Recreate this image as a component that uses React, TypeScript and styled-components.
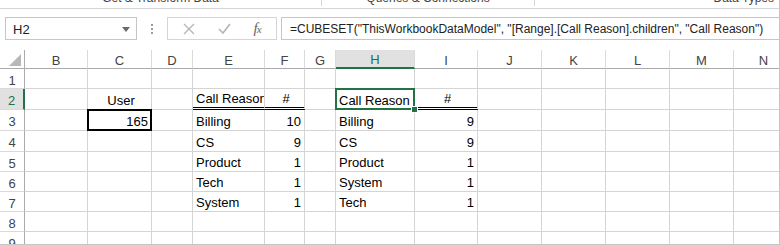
import React from 'react';
import styled, { createGlobalStyle, css } from 'styled-components';

const GlobalStyle = createGlobalStyle`
  html, body {
    margin: 0;
    padding: 0;
    background: #fff;
  }
  body {
    font-family: "Liberation Sans", Arial, sans-serif;
  }
`;

const GREEN = '#217346';

const Window = styled.div`
  width: 780px;
  height: 245px;
  box-sizing: border-box;
  overflow: hidden;
  display: flex;
  flex-direction: column;
  border-right: 1px solid #c6c6c6;
  border-bottom: 1px solid #c6c6c6;
  background: #fff;
`;

const RibbonStrip = styled.div`
  height: 8px;
  flex: none;
  display: flex;
  overflow: hidden;
  border-bottom: 1px solid #d5d5d5;
  background: #fff;
`;

const RibbonGroup = styled.div<{ $w: number; $align?: string }>`
  width: ${(p) => p.$w}px;
  flex: none;
  height: 6px;
  display: flex;
  justify-content: ${(p) => p.$align || 'center'};
  padding-right: ${(p) => (p.$align ? '6px' : '0')};
  box-sizing: border-box;
  border-right: 1px solid #d5d5d5;
  overflow: visible;

  &:last-child {
    border-right: none;
  }
`;

const RibbonLabel = styled.span`
  font-size: 12px;
  line-height: 12px;
  color: #444;
  margin-top: -8px;
  white-space: nowrap;
`;

const FormulaBand = styled.div`
  height: 41px;
  flex: none;
  display: flex;
  align-items: flex-start;
  padding: 8px 0 0 5px;
  box-sizing: border-box;
  background: #fff;
`;

const NameBox = styled.div`
  width: 132px;
  height: 23px;
  flex: none;
  box-sizing: border-box;
  border: 1px solid #c6c6c6;
  background: #fff;
  display: flex;
  align-items: center;
  justify-content: space-between;
  padding: 1px 6px 0 7px;
  font-size: 13px;
  color: #222;
`;

const Grip = styled.div`
  width: 30px;
  height: 23px;
  flex: none;
  display: flex;
  flex-direction: column;
  align-items: center;
  justify-content: center;
  gap: 2px;

  span {
    width: 2px;
    height: 2px;
    background: #9a9a9a;
  }
`;

const FxBox = styled.div`
  width: 110px;
  height: 23px;
  flex: none;
  box-sizing: border-box;
  border: 1px solid #d5d5d5;
  background: #fff;
  display: flex;
  align-items: center;
  justify-content: space-around;
  padding: 0 4px;
`;

const FxLabel = styled.span`
  font-family: "Liberation Serif", "Times New Roman", serif;
  font-style: italic;
  font-size: 15px;
  color: #666;
  letter-spacing: -1px;

  small {
    font-size: 11px;
  }
`;

const FormulaInput = styled.div`
  margin-left: 4px;
  flex: 1;
  height: 23px;
  box-sizing: border-box;
  border: 1px solid #c6c6c6;
  border-right: none;
  background: #fff;
  display: flex;
  align-items: center;
  padding: 1px 0 0 8px;
  font-size: 12px;
  color: #222;
  white-space: nowrap;
  overflow: hidden;
`;

const Sheet = styled.div<{ $cols: string; $rows: string }>`
  display: grid;
  grid-template-columns: ${(p) => p.$cols};
  grid-template-rows: ${(p) => p.$rows};
  font-size: 13px;
`;

const ColHeader = styled.div<{ $active?: boolean }>`
  box-sizing: border-box;
  display: flex;
  align-items: center;
  justify-content: center;
  padding-top: 2px;
  color: #444;
  background: #fff;
  border-right: 1px solid #dadada;
  border-bottom: 1px solid #ababab;
  ${(p) =>
    p.$active &&
    css`
      background: #e1e1e1;
      color: ${GREEN};
      border-bottom: 2px solid ${GREEN};
    `}
`;

const Corner = styled.div`
  box-sizing: border-box;
  border-right: 1px solid #ababab;
  border-bottom: 1px solid #ababab;
  display: flex;
  align-items: flex-end;
  justify-content: flex-end;
  padding: 0 3px 2px 0;
`;

const RowHeader = styled.div<{ $active?: boolean }>`
  box-sizing: border-box;
  display: flex;
  align-items: center;
  justify-content: center;
  padding-top: 3px;
  color: #444;
  background: #fff;
  border-right: 1px solid #ababab;
  border-bottom: 1px solid #dadada;
  ${(p) =>
    p.$active &&
    css`
      background: #e1e1e1;
      color: ${GREEN};
      border-right: 2px solid ${GREEN};
    `}
`;

type Frame = 'select' | 'thick';

const Cell = styled.div<{ $align?: string; $double?: boolean; $frame?: Frame }>`
  box-sizing: border-box;
  position: relative;
  display: flex;
  align-items: flex-end;
  justify-content: ${(p) =>
    p.$align === 'right' ? 'flex-end' : p.$align === 'center' ? 'center' : 'flex-start'};
  padding: 0 ${(p) => (p.$align === 'right' ? '3px' : '0')} 0 3px;
  line-height: 16px;
  color: #000;
  white-space: nowrap;
  overflow: ${(p) => (p.$frame ? 'visible' : 'hidden')};
  border-right: 1px solid #d4d4d4;
  border-bottom: ${(p) => (p.$double ? '3px double #000' : '1px solid #d4d4d4')};
  ${(p) =>
    p.$frame &&
    css`
      z-index: 2;
      &::after {
        content: '';
        position: absolute;
        top: -1px;
        left: -1px;
        right: -1px;
        bottom: -1px;
        border: 2px solid ${p.$frame === 'select' ? GREEN : '#000'};
        pointer-events: none;
      }
    `}
`;

const CellText = styled.span`
  overflow: hidden;
`;

const FillHandle = styled.span`
  position: absolute;
  right: -4px;
  bottom: -4px;
  width: 5px;
  height: 5px;
  background: ${GREEN};
  border: 1px solid #fff;
  z-index: 3;
`;

const columns = ['B', 'C', 'D', 'E', 'F', 'G', 'H', 'I', 'J', 'K', 'L', 'M', 'N'];
const widths = [25, 63, 64, 41, 72, 40, 31, 79, 63, 64, 64, 64, 64, 60];
const heights = [19, 20, 21, 21, 21, 20, 20, 20, 20, 20];

type CellDef = { v: string; align?: string; double?: boolean; frame?: Frame };

const data: Record<string, CellDef> = {
  C2: { v: 'User', align: 'center' },
  C3: { v: '165', align: 'right', frame: 'thick' },
  E2: { v: 'Call Reason', double: true },
  F2: { v: '#', align: 'center', double: true },
  H2: { v: 'Call Reason', frame: 'select' },
  I2: { v: '#', align: 'center', double: true },
};

const left = [
  ['Billing', '10'],
  ['CS', '9'],
  ['Product', '1'],
  ['Tech', '1'],
  ['System', '1'],
];
const right = [
  ['Billing', '9'],
  ['CS', '9'],
  ['Product', '1'],
  ['System', '1'],
  ['Tech', '1'],
];
left.forEach(([name, n], i) => {
  data[`E${i + 3}`] = { v: name };
  data[`F${i + 3}`] = { v: n, align: 'right' };
});
right.forEach(([name, n], i) => {
  data[`H${i + 3}`] = { v: name };
  data[`I${i + 3}`] = { v: n, align: 'right' };
});

const XIcon = () => (
  <svg width="12" height="12" viewBox="0 0 12 12">
    <path d="M1 1 L11 11 M11 1 L1 11" stroke="#b4b4b4" strokeWidth="1.3" fill="none" />
  </svg>
);

const CheckIcon = () => (
  <svg width="13" height="11" viewBox="0 0 13 11">
    <path d="M1 6 L5 10 L12 1" stroke="#b4b4b4" strokeWidth="1.6" fill="none" />
  </svg>
);

const DropArrow = () => (
  <svg width="8" height="5" viewBox="0 0 8 5">
    <path d="M0 0 H8 L4 5 Z" fill="#6a6a6a" />
  </svg>
);

const CornerTriangle = () => (
  <svg width="12" height="12" viewBox="0 0 12 12">
    <path d="M12 0 V12 H0 Z" fill="#b8b8b8" />
  </svg>
);

const App: React.FC = () => {
  return (
    <>
      <GlobalStyle />
      <Window>
        <RibbonStrip>
          <RibbonGroup $w={322}>
            <RibbonLabel>Get &amp; Transform Data</RibbonLabel>
          </RibbonGroup>
          <RibbonGroup $w={213}>
            <RibbonLabel>Queries &amp; Connections</RibbonLabel>
          </RibbonGroup>
          <RibbonGroup $w={245} $align="flex-end">
            <RibbonLabel>Data Types</RibbonLabel>
          </RibbonGroup>
        </RibbonStrip>

        <FormulaBand>
          <NameBox>
            <span>H2</span>
            <DropArrow />
          </NameBox>
          <Grip>
            <span />
            <span />
            <span />
          </Grip>
          <FxBox>
            <XIcon />
            <CheckIcon />
            <FxLabel>
              f<small>x</small>
            </FxLabel>
          </FxBox>
          <FormulaInput>
            =CUBESET("ThisWorkbookDataModel", "[Range].[Call Reason].children", "Call Reason")
          </FormulaInput>
        </FormulaBand>

        <Sheet
          $cols={widths.map((w) => `${w}px`).join(' ')}
          $rows={heights.map((h) => `${h}px`).join(' ')}
        >
          <Corner>
            <CornerTriangle />
          </Corner>
          {columns.map((c) => (
            <ColHeader key={c} $active={c === 'H'}>
              {c}
            </ColHeader>
          ))}
          {heights.slice(1).map((_, ri) => {
            const row = ri + 1;
            return (
              <React.Fragment key={row}>
                <RowHeader $active={row === 2}>{row}</RowHeader>
                {columns.map((c) => {
                  const d = data[`${c}${row}`];
                  return (
                    <Cell
                      key={c}
                      $align={d?.align}
                      $double={d?.double}
                      $frame={d?.frame}
                    >
                      {d && <CellText>{d.v}</CellText>}
                      {d?.frame === 'select' && <FillHandle />}
                    </Cell>
                  );
                })}
              </React.Fragment>
            );
          })}
        </Sheet>
      </Window>
    </>
  );
};

export default App;
